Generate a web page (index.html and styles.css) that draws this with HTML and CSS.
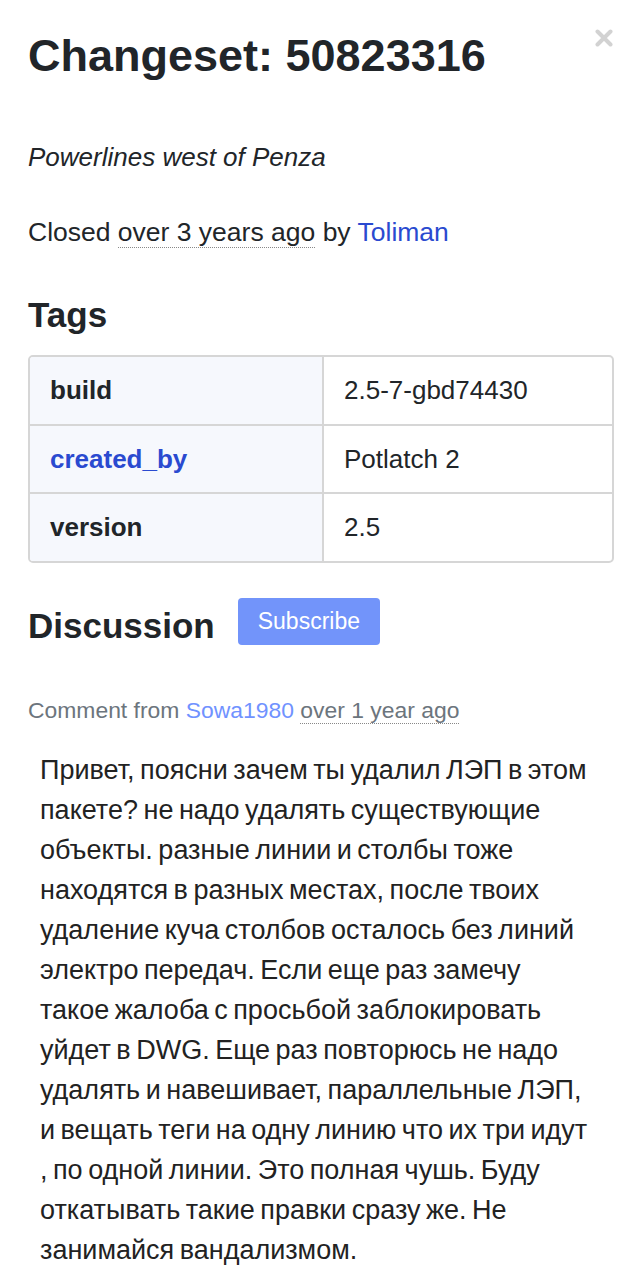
FILE: index.html
```html
<!DOCTYPE html>
<html lang="en">
<head>
    <meta charset="UTF-8">
    <title>Changeset: 50823316</title>
    <meta name="viewport" content="width=device-width, initial-scale=1">
    <link rel="stylesheet" href="styles.css">
</head>
<body>
    <div class="sidebar">
        <a class="close" href="#" title="Close">
            <svg width="18" height="18" viewBox="0 0 18 18">
                <path d="M2.5 2.5 L15.5 15.5 M15.5 2.5 L2.5 15.5" stroke="#d2d2d2" stroke-width="4" stroke-linecap="round"/>
            </svg>
        </a>
        <h1>Changeset: 50823316</h1>
        <p class="changeset-comment">Powerlines west of Penza</p>
        <p class="details">Closed <abbr title="2017-07-26">over 3 years ago</abbr> by <a href="#">Toliman</a></p>

        <h2>Tags</h2>
        <table class="tags">
            <tr>
                <th>build</th>
                <td>2.5-7-gbd74430</td>
            </tr>
            <tr>
                <th><a href="#">created_by</a></th>
                <td>Potlatch 2</td>
            </tr>
            <tr>
                <th>version</th>
                <td>2.5</td>
            </tr>
        </table>

        <div class="discussion-head">
            <h2>Discussion</h2>
            <button type="button" class="subscribe">Subscribe</button>
        </div>

        <div class="comment">
            <p class="meta">Comment from <a href="#">Sowa1980</a> <abbr title="2019-05-12">over 1 year ago</abbr></p>
            <div class="comment-body">
                Привет, поясни зачем ты удалил ЛЭП в этом пакете? не надо удалять существующие объекты. разные линии и столбы тоже находятся в разных местах, после твоих удаление куча столбов осталось без линий электро передач. Если еще раз замечу такое жалоба с просьбой заблокировать уйдет в DWG. Еще раз повторюсь не надо удалять и навешивает, параллельные ЛЭП, и вещать теги на одну линию что их три идут , по одной линии. Это полная чушь. Буду откатывать такие правки сразу же. Не занимайся вандализмом.
            </div>
        </div>
    </div>
</body>
</html>
```

FILE: styles.css
```css
body {
    margin: 0;
    padding: 0;
    background: #fff;
    color: #212529;
    font-family: "Liberation Sans", Arial, sans-serif;
    font-size: 26px;
}
a {
    color: #2a4ad0;
    text-decoration: none;
}
abbr {
    text-decoration: none;
    border-bottom: 1px dotted #888;
}
.sidebar {
    position: relative;
    padding: 29px 26px 0 28px;
}
.close {
    position: absolute;
    top: 29px;
    right: 27px;
    line-height: 0;
}
h1 {
    margin: 0;
    font-size: 45px;
    line-height: 1.2;
    font-weight: bold;
}
.changeset-comment {
    margin: 56px 0 0 0;
    font-style: italic;
    line-height: 1.4;
}
.details {
    margin: 39px 0 0 0;
    font-size: 26.5px;
    line-height: 1.4;
}
h2 {
    margin: 0;
    font-size: 35px;
    font-weight: bold;
    line-height: 1.2;
}
.details + h2 {
    margin-top: 43px;
}
.tags {
    width: 100%;
    margin-top: 19px;
    border-collapse: separate;
    border-spacing: 0;
    border: 2px solid #d6d6d6;
    border-radius: 5px;
    overflow: hidden;
}
.tags th,
.tags td {
    padding: 15px 20px;
    text-align: left;
    line-height: 1.4;
    border-bottom: 2px solid #d6d6d6;
}
.tags tr:last-child th,
.tags tr:last-child td {
    border-bottom: none;
}
.tags th {
    width: 252px;
    background: #f6f8fd;
    border-right: 2px solid #d6d6d6;
    font-weight: bold;
}
.tags th a {
    color: #2a4ad0;
}
.discussion-head {
    display: flex;
    align-items: flex-start;
    gap: 23px;
    margin-top: 35px;
}
.discussion-head h2 {
    margin-top: 7px;
}
.subscribe {
    background: #7294fa;
    color: #fff;
    border: none;
    border-radius: 4px;
    font-family: inherit;
    font-size: 23px;
    padding: 11px 20px;
    line-height: 1.1;
}
.comment .meta {
    margin: 50px 0 0 0;
    font-size: 22.9px;
    color: #6c757d;
}
.comment .meta a {
    color: #7092ff;
}
.comment-body {
    margin-top: 26px;
    padding: 0 22px 0 12px;
    line-height: 40px;
    font-size: 27px;
    word-spacing: -2px;
    color: #222;
}
```
